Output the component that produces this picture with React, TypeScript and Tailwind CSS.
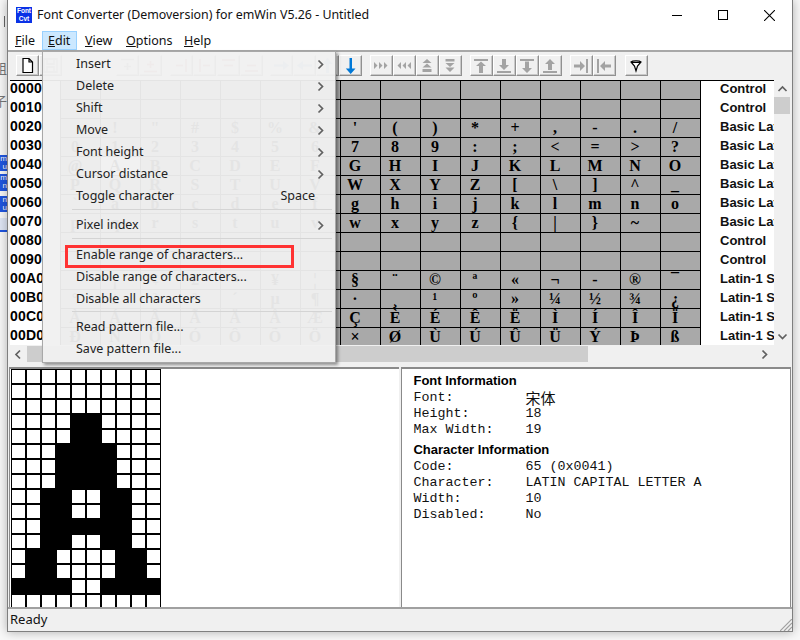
const rows = [
  { code: '0000', chars: '', block: 'Control' },
  { code: '0010', chars: '', block: 'Control' },
  { code: '0020', chars: ' !"#$%&\'()*+,-./', block: 'Basic Latin' },
  { code: '0030', chars: '0123456789:;<=>?', block: 'Basic Latin' },
  { code: '0040', chars: '@ABCDEFGHIJKLMNO', block: 'Basic Latin' },
  { code: '0050', chars: 'PQRSTUVWXYZ[\\]^_', block: 'Basic Latin' },
  { code: '0060', chars: '`abcdefghijklmno', block: 'Basic Latin' },
  { code: '0070', chars: 'pqrstuvwxyz{|}~ ', block: 'Basic Latin' },
  { code: '0080', chars: '', block: 'Control' },
  { code: '0090', chars: '', block: 'Control' },
  { code: '00A0', chars: ' ¡¢£¤¥¦§¨©ª«¬-®¯', block: 'Latin-1 Supplement' },
  { code: '00B0', chars: '°±²³´µ¶·¸¹º»¼½¾¿', block: 'Latin-1 Supplement' },
  { code: '00C0', chars: 'ÀÁÂÃÄÅÆÇÈÉÊËÌÍÎÏ', block: 'Latin-1 Supplement' },
  { code: '00D0', chars: 'ÐÑÒÓÔÕÖ×ØÙÚÛÜÝÞß', block: 'Latin-1 Supplement' },
];

const glyph = [
  '..........',
  '..........',
  '..........',
  '....##....',
  '....##....',
  '...####...',
  '...####...',
  '...####...',
  '..##..##..',
  '..##..##..',
  '..######..',
  '..##..##..',
  '.##....##.',
  '.##....##.',
  '####..####',
  '..........',
];

const menuRows = [
  { label: 'Insert', sub: true },
  { label: 'Delete', sub: true },
  { label: 'Shift', sub: true },
  { label: 'Move', sub: true },
  { label: 'Font height', sub: true },
  { label: 'Cursor distance', sub: true },
  { label: 'Toggle character', hint: 'Space' },
  { sep: 'h-[7px] pt-[3px]' },
  { label: 'Pixel index', sub: true },
  { sep: 'h-[8px] pt-[3px]' },
  { label: 'Enable range of characters...' },
  { label: 'Disable range of characters...' },
  { label: 'Disable all characters' },
  { sep: 'h-[6px] pt-[2px]' },
  { label: 'Read pattern file...' },
  { label: 'Save pattern file...' },
];

const G = '#a3a3a3';

function ToolIcon({ name }: { name: string }) {
  const body: Record<string, React.ReactNode> = {
    new: <path d="M6 2.500h6l3.500 3.500v10.500H6z M12 2.500V6h3.500" fill="#fff" stroke="#000" strokeWidth="1.200" />,
    save: <path d="M4 3h13v13H4z M7 3v5h7V3 M7 16v-5h7v5" fill="none" stroke={G} strokeWidth="1.400" />,
    plusTop: <path d="M4 3.500h13 M10.500 7v7 M7 10.500h7" fill="none" stroke={G} strokeWidth="1.600" />,
    plusBottom: <path d="M4 15.500h13 M10.500 5v7 M7 8.500h7" fill="none" stroke="#c88" strokeWidth="1.600" />,
    minusRight: <path d="M15 3v13 M5 9.500h7" fill="none" stroke="#c88" strokeWidth="1.600" />,
    minusLeft: <path d="M6 3v13 M9 9.500h7" fill="none" stroke="#c88" strokeWidth="1.600" />,
    minusTop: <path d="M4 4h13 M6 9.500h9" fill="none" stroke="#c88" strokeWidth="1.600" />,
    minusBottom: <path d="M4 15h13 M6 9.500h9" fill="none" stroke="#c88" strokeWidth="1.600" />,
    right: <path d="M3 8.500h9V5l6 4.500-6 4.500v-3.500H3z" fill="#9ab8e0" />,
    left: <path d="M18 8.500H9V5L3 9.500 9 14v-3.500h9z" fill="#9ab8e0" />,
    up: <path d="M9 17V8H5.500L10.500 2l5 6H12v9z" fill="#9ab8e0" />,
    down: <path d="M9.500 2h2.500v10.500h3.500L10.700 18 5.800 12.500h3.700z" fill="#0078d7" />,
    ffwd: <path d="M3 6l3.500 3.500L3 13z M8 6l3.500 3.500L8 13z M13 6l3.500 3.500L13 13z" fill={G} />,
    rew: <path d="M7 6L3.500 9.500 7 13z M12 6L8.500 9.500 12 13z M17 6l-3.500 3.500 3.500 3.500z" fill={G} />,
    tripleUp: <path d="M10 3l4.500 4h-9z M10 7.500l4.500 4h-9z M5.500 13h9v3h-9z" fill={G} />,
    tripleDown: <path d="M5.500 3h9v2.500h-9z M5.500 7h9L10 11z M5.500 11.500h9L10 16z" fill={G} />,
    barUp: <path d="M3 3h14v2H3z M10 5.500l5 4.500h-3v7H8v-7H5z" fill={G} />,
    arrowOnBar: <path d="M3 15h14v2H3z M8 3h4v6h3l-5 5-5-5h3z" fill={G} />,
    barDown: <path d="M3 3h14v2H3z M8 5.500h4V12h3l-5 5-5-5h3z" fill={G} />,
    arrowUpBar: <path d="M3 15h14v2H3z M10 3l5 5h-3v6H8V8H5z" fill={G} />,
    toEdge: <path d="M15 3h2v14h-2z M3 8.500h6V5l5 5-5 5v-3.500H3z" fill={G} />,
    fromEdge: <path d="M3 3h2v14H3z M17 8.500h-6V5l-5 5 5 5v-3.500h6z" fill={G} />,
    filter: <path d="M5 6c1.500-1.500 8.500-1.500 10 0l-3.500 4-1.500 5-1.500-5z M5.500 6.500h9" fill="#fff" stroke="#000" strokeWidth="1.200" />,
  };
  return (
    <svg viewBox="0 0 21 19" width="21" height="19" className="block">
      {body[name]}
    </svg>
  );
}

function ToolButton({ name, className = '' }: { name: string; className?: string }) {
  return (
    <div className={`w-[23px] h-[21px] shrink-0 border border-t-white border-l-white border-r-[#909090] border-b-[#909090] bg-[#f0f0f0] shadow-[inset_-1px_-1px_0_#c8c8c8] ${className}`}>
      <ToolIcon name={name} />
    </div>
  );
}

function Chevron({ dir, className = '' }: { dir: 'up' | 'down' | 'left' | 'right'; className?: string }) {
  const d = {
    up: 'M1.500 7L5.500 3l4 4',
    down: 'M1.500 3.500l4 4 4-4',
    left: 'M7 1.500l-4 4 4 4',
    right: 'M3.500 1.500l4 4-4 4',
  }[dir];
  return (
    <svg viewBox="0 0 11 11" width="11" height="11" className={className}>
      <path d={d} fill="none" stroke="#606060" strokeWidth="1.700" />
    </svg>
  );
}

function CodeGrid() {
  return (
    <div className="flex-1 min-w-0 h-[265px] overflow-hidden border-t border-black bg-white">
      {rows.map(row => (
        <div key={row.code} className="flex h-[19px]">
          <div className="w-[51px] shrink-0 border-r border-black font-['Liberation_Sans'] font-bold text-[14px] leading-[15px] tracking-[0.2px] text-black">
            {row.code}
          </div>
          {Array.from({ length: 16 }).map((_, i) => {
            const ch = row.chars ? Array.from(row.chars)[i] : '';
            const selected = row.code === '0040' && i === 1;
            return (
              <div
                key={i}
                className={`w-[40px] shrink-0 border-r border-b border-black font-['Liberation_Serif'] font-bold text-[16px] leading-[18px] text-black ${selected ? 'bg-white' : 'bg-[#a9a9a9]'}`}
              >
                <div className="w-[28px] text-center">{ch}</div>
              </div>
            );
          })}
          <div className="w-[73px] shrink-0 overflow-hidden whitespace-nowrap pl-[19px] font-['Liberation_Sans'] font-bold text-[13px] leading-[15px] text-[#111]">
            {row.block}
          </div>
        </div>
      ))}
    </div>
  );
}

function InfoRow({ label, value, cjk }: { label: string; value: string; cjk?: boolean }) {
  return (
    <div className="flex h-[16px] items-center font-['Liberation_Mono'] text-[13.330px] leading-[16px] text-[#111]">
      <div className="w-[112px] shrink-0">{label}</div>
      <div className={cjk ? "font-['Noto_Sans_CJK_SC'] text-[15px]" : ''}>{value}</div>
    </div>
  );
}

function DesktopIcon({ top, bottom, className }: { top: string; bottom: string; className: string }) {
  return (
    <div className={`flex flex-col items-end overflow-hidden bg-[#1f55e0] font-['Liberation_Sans'] text-[8px] leading-[8px] text-white ${className}`}>
      <div>{top}</div>
      <div>{bottom}</div>
    </div>
  );
}

export default function App() {
  return (
    <div className="relative w-[800px] h-[640px] overflow-hidden bg-[#f8f8f8] font-['Noto_Sans',sans-serif] flex">
      {/* bits of the desktop behind the window */}
      <div className="w-[7px] shrink-0 flex flex-col overflow-hidden">
        <div className="mt-[16px] ml-[4px] w-[1px] h-[11px] bg-[#666]" />
        <div className="mt-[34px] h-[14px] text-[13px] leading-[14px] text-[#777] -ml-[6px] font-['Noto_Sans_CJK_SC']">组</div>
        <div className="mt-[19px] h-[14px] text-[13px] leading-[14px] text-[#777] -ml-[6px] font-['Noto_Sans_CJK_SC']">子</div>
        <DesktopIcon top="m" bottom="u" className="mt-[47px] h-[16px]" />
        <DesktopIcon top="m" bottom="n" className="mt-[3px] h-[17px]" />
        <DesktopIcon top="n" bottom="u" className="mt-[5px] h-[16px]" />
        <div className="mt-[6px] h-[14px] bg-[#dfe6f5] border-b-2 border-[#1f55e0]" />
      </div>

      <div className="w-[786px] h-[632px] shrink-0 flex flex-col border-x border-b border-[#7f7f7f] bg-[#f0f0f0] shadow-[0_0_10px_rgba(0,0,0,0.3)]">
        {/* title bar */}
        <div className="h-[30px] shrink-0 flex items-center bg-white">
          <div className="ml-[8px] w-[16px] h-[16px] bg-[#0a32e6] text-white font-['Liberation_Sans'] font-bold text-[6.500px] leading-[8px] text-center">
            <div>Font</div>
            <div>Cvt</div>
          </div>
          <div className="ml-[5px] pt-[1px] text-[12.400px] text-[#111] whitespace-nowrap">
            Font Converter (Demoversion) for emWin V5.26 - Untitled
          </div>
          <div className="ml-auto flex">
            <div className="w-[46px] h-[30px] flex items-center justify-center">
              <div className="w-[10px] h-[1px] bg-black" />
            </div>
            <div className="w-[46px] h-[30px] flex items-center justify-center">
              <div className="w-[10px] h-[10px] border border-black" />
            </div>
            <div className="w-[46px] h-[30px] flex items-center justify-center">
              <svg viewBox="0 0 10 10" width="11" height="11">
                <path d="M0 0l10 10M10 0L0 10" stroke="#000" strokeWidth="1" />
              </svg>
            </div>
          </div>
        </div>

        {/* menu bar */}
        <div className="h-[22px] shrink-0 flex items-start pt-[1px] pl-[1px] bg-white border-b-2 border-[#a8a8a8] text-[12.500px] leading-[19px] text-[#111]">
          <div className="w-[33px] h-[19px] pl-[6px]"><u>F</u>ile</div>
          <div className="w-[35px] h-[19px] pl-[5px] bg-[#cce8ff] border border-[#99d1ff] leading-[17px]"><u>E</u>dit</div>
          <div className="w-[41px] h-[19px] pl-[8px]"><u>V</u>iew</div>
          <div className="w-[65px] h-[19px] pl-[8px]"><u>O</u>ptions</div>
          <div className="pl-[1px]"><u>H</u>elp</div>
        </div>

        {/* toolbar */}
        <div className="h-[28px] shrink-0 flex items-start pt-[3px] pl-[8px]">
          <ToolButton name="new" />
          <ToolButton name="save" />
          <ToolButton name="plusTop" className="ml-[54px]" />
          <ToolButton name="plusBottom" />
          <ToolButton name="minusRight" className="ml-[8px]" />
          <ToolButton name="minusLeft" />
          <ToolButton name="minusTop" className="ml-px" />
          <ToolButton name="minusBottom" />
          <ToolButton name="right" className="ml-[7px]" />
          <ToolButton name="left" />
          <ToolButton name="up" />
          <ToolButton name="down" />
          <ToolButton name="ffwd" className="ml-[8px]" />
          <ToolButton name="rew" />
          <ToolButton name="tripleUp" />
          <ToolButton name="tripleDown" />
          <ToolButton name="barUp" className="ml-[8px]" />
          <ToolButton name="arrowOnBar" />
          <ToolButton name="barDown" />
          <ToolButton name="arrowUpBar" />
          <ToolButton name="toEdge" className="ml-[8px]" />
          <ToolButton name="fromEdge" />
          <ToolButton name="filter" className="ml-[9px]" />
        </div>

        {/* code table + scroll bars */}
        <div className="flex pl-[2px] pr-[2px]">
          <CodeGrid />
          <div className="w-[16px] shrink-0 h-[265px] flex flex-col items-center">
            <Chevron dir="up" className="mt-[4px]" />
            <div className="mt-[2px] w-[16px] h-[17px] bg-[#cdcdcd]" />
            <Chevron dir="down" className="mt-auto mb-[3px]" />
          </div>
        </div>
        <div className="h-[16px] mt-px flex items-center pl-[2px] pr-[2px]">
          <div className="w-[17px] flex justify-center">
            <Chevron dir="left" />
          </div>
          <div className="w-[561px] h-[16px] bg-[#cdcdcd]" />
          <Chevron dir="right" className="ml-[171px]" />
        </div>
        <div className="h-[5px] shrink-0" />

        {/* bottom panes */}
        <div className="h-[240px] shrink-0 flex">
          <div className="w-[391px] ml-px border-t-2 border-l border-[#8a8a8a] bg-white pl-[1px] overflow-hidden">
            <div className="w-[150px] h-[238px] grid grid-cols-[repeat(10,13px)] gap-[2px] content-start bg-black overflow-hidden pl-[1px] pt-[1px]">
              {glyph.flatMap((line, y) =>
                Array.from(line).map((c, x) => (
                  <div key={`${y}-${x}`} className={`h-[13px] ${c === '#' ? 'bg-black' : 'bg-white'}`} />
                )),
              )}
            </div>
          </div>
          <div className="w-[390px] ml-[2px] mr-px border-t-2 border-x border-[#8a8a8a] bg-white pl-[11px] pt-[3px]">
            <div className="h-[18px] font-['Liberation_Sans'] font-bold text-[13px] leading-[18px] text-black">Font Information</div>
            <InfoRow label="Font:" value="宋体" cjk />
            <InfoRow label="Height:" value="18" />
            <InfoRow label="Max Width:" value="19" />
            <div className="mt-[3px] h-[18px] font-['Liberation_Sans'] font-bold text-[13px] leading-[18px] text-black">Character Information</div>
            <InfoRow label="Code:" value="65 (0x0041)" />
            <InfoRow label="Character:" value="LATIN CAPITAL LETTER A" />
            <InfoRow label="Width:" value="10" />
            <InfoRow label="Disabled:" value="No" />
          </div>
        </div>

        {/* status bar */}
        <div className="flex-1 flex items-center justify-between pl-[2px] border-t-2 border-[#a0a0a0] text-[13px] text-[#111]">
          <div>Ready</div>
          <svg viewBox="0 0 12 12" width="12" height="12" className="self-end">
            <path d="M0 12L12 0M4 12l8-8M8 12l4-4" stroke="#a0a0a0" strokeWidth="1.200" />
          </svg>
        </div>
      </div>

      {/* open Edit menu */}
      <div className="absolute left-[42px] top-[51px] w-[294px] h-[312px] border border-[#a8a8a8] bg-[#f0f0f0]/[0.95] shadow-[2px_2px_3px_rgba(0,0,0,0.4)] text-[12.500px] text-[#222]">
        {menuRows.map((m, i) =>
          m.sep ? (
            <div key={i} className={m.sep}>
              <div className="ml-[29px] mr-[3px] h-px bg-[#d4d4d4]" />
            </div>
          ) : (
            <div key={i} className="h-[22px] flex items-center pt-[2px] pl-[33px] pr-[9px]">
              <span className="whitespace-nowrap">{m.label}</span>
              {m.hint && <span className="ml-auto mr-[11px]">{m.hint}</span>}
              {m.sub && <Chevron dir="right" className="ml-auto" />}
            </div>
          ),
        )}
        <div className="absolute left-[22px] top-[193px] w-[229px] h-[23px] border-[3px] border-[#ff3333]" />
      </div>
    </div>
  );
}
